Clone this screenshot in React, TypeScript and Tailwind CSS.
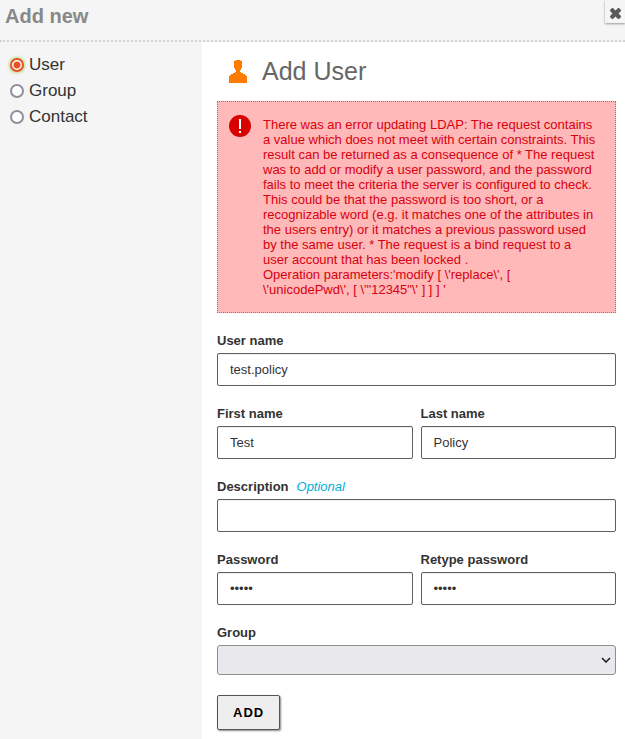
import { useState } from "react";
import type { InputHTMLAttributes } from "react";

const kinds = ["User", "Group", "Contact"];

type FieldProps = InputHTMLAttributes<HTMLInputElement> & {
  id: string;
  label: string;
  optional?: boolean;
};

function Field({ id, label, optional, ...rest }: FieldProps) {
  return (
    <div className="flex min-w-0 flex-col gap-[5px]">
      <label htmlFor={id} className="font-bold leading-[15px]">
        {label}
        {optional && <em className="ml-2 font-normal text-[#00b0d8]">Optional</em>}
      </label>
      <input
        id={id}
        className="h-[33px] w-full rounded-[2px] border border-[#5f5f5f] bg-white px-3 text-[13px] text-[#333] shadow-[inset_0_1px_1px_#eee]"
        {...rest}
      />
    </div>
  );
}

function UserIcon() {
  return (
    <svg width="18" height="23" viewBox="0 0 18 23" fill="#ff7b00" aria-hidden="true">
      <path d="M7 0h4l1 1h1v7h-1v2h-1v2h1v1h2v1h2v1h1v1h1v7H0v-7h1v-1h1v-1h2v-1h2v-1h1v-2H6V8H5V1h1z" />
    </svg>
  );
}

function AlertIcon() {
  return (
    <svg className="shrink-0" width="22" height="22" viewBox="0 0 22 22" aria-hidden="true">
      <circle cx="11" cy="11" r="11" fill="#d90000" />
      <path d="M10 4h2v10h-2zM10 16h2v2h-2z" fill="#fff" />
    </svg>
  );
}

export default function App() {
  const [kind, setKind] = useState("User");

  return (
    <div className="flex min-h-screen flex-col bg-[#f5f5f5] font-['Liberation_Sans',Arial,sans-serif] text-[13px] text-[#333]">
      <header className="flex h-[42px] items-start justify-between border-b-2 border-dotted border-[#d2d2d2]">
        <h1 className="pl-[5px] pt-1 text-[20px] font-bold leading-6 text-[#888]">Add new</h1>
        <button
          type="button"
          aria-label="Close"
          className="flex h-[23px] w-5 items-end justify-center bg-[#f5f5f5] pb-1 shadow-[0_1px_2px_#999]"
        >
          <svg width="11" height="11" viewBox="0 0 11 11" fill="#5a5a5a" aria-hidden="true">
            <path d="M2 0h1l2.500 2.500L8 0h1l2 2v1L8.500 5.500 11 8v1l-2 2H8L5.500 8.500 3 11H2L0 9V8l2.500-2.500L0 3V2z" />
          </svg>
        </button>
      </header>

      <div className="flex grow">
        <fieldset aria-label="Type" className="w-[202px] shrink-0 px-[10px] pt-[10px] text-[17px]">
          {kinds.map((name) => (
            <label key={name} className="flex h-[26px] items-center gap-[5px]">
              <input
                type="radio"
                name="kind"
                checked={kind === name}
                onChange={() => setKind(name)}
                className="size-[14px] appearance-none rounded-full border-2 border-[#8f8f9d] bg-white checked:border-[#e95420] checked:bg-[radial-gradient(circle,#e95420_3px,#fff_4px)] checked:shadow-[0_0_3px_1px_#b5d88a]"
              />
              <span className="pb-px leading-5">{name}</span>
            </label>
          ))}
        </fieldset>

        <main className="min-w-0 grow bg-white pb-2 pl-[15px] pr-[9px]">
          <div className="flex h-[59px] items-center gap-[15px] pl-3">
            <UserIcon />
            <h2 className="pb-0.5 text-[25px] leading-7 text-[#666]">Add User</h2>
          </div>

          <div
            role="alert"
            className="flex items-start gap-3 border border-dotted border-[#e2525a] bg-[#ffb9b9] pb-[15px] pl-[11px] pr-[17px] pt-[13px] text-[#d9000f]"
          >
            <AlertIcon />
            <p className="pt-0.5 leading-[15px]">
              There was an error updating LDAP: The request contains a value which does not meet with
              certain constraints. This result can be returned as a consequence of * The request was to
              add or modify a user password, and the password fails to meet the criteria the server is
              configured to check. This could be that the password is too short, or a recognizable word
              (e.g. it matches one of the attributes in the users entry) or it matches a previous
              password used by the same user. * The request is a bind request to a user account that has
              been locked .
              <br />
              {"Operation parameters:'modify [ \\'replace\\', [ \\'unicodePwd\\', [ \\'\"12345\"\\' ] ] ] '"}
            </p>
          </div>

          <form className="flex flex-col gap-5 pt-5" onSubmit={(e) => e.preventDefault()}>
            <Field id="username" label="User name" defaultValue="test.policy" />
            <div className="grid grid-cols-2 gap-2">
              <Field id="first" label="First name" defaultValue="Test" />
              <Field id="last" label="Last name" defaultValue="Policy" />
            </div>
            <Field id="description" label="Description" optional />
            <div className="grid grid-cols-2 gap-2">
              <Field id="password" label="Password" type="password" defaultValue="12345" />
              <Field id="retype" label="Retype password" type="password" defaultValue="12345" />
            </div>
            <div className="flex flex-col gap-[5px]">
              <label htmlFor="group" className="font-bold leading-[15px]">
                Group
              </label>
              <div className="grid items-center">
                <select
                  id="group"
                  className="col-start-1 row-start-1 h-[30px] w-full appearance-none rounded-[3px] border border-[#8f8f8f] bg-[#e9e9ed] px-3"
                >
                  <option value="" />
                </select>
                <svg
                  className="pointer-events-none col-start-1 row-start-1 mr-[5px] justify-self-end"
                  width="10"
                  height="6"
                  viewBox="0 0 10 6"
                  fill="none"
                  stroke="#222"
                  strokeWidth="1.600"
                  aria-hidden="true"
                >
                  <path d="M1 1l4 4 4-4" />
                </svg>
              </div>
            </div>
            <button
              type="submit"
              className="h-[35px] self-start rounded-[2px] border border-[#555] bg-[#eee] px-[15px] font-bold tracking-[1px] text-black shadow-[1px_1px_2px_#888]"
            >
              ADD
            </button>
          </form>
        </main>
      </div>
    </div>
  );
}
